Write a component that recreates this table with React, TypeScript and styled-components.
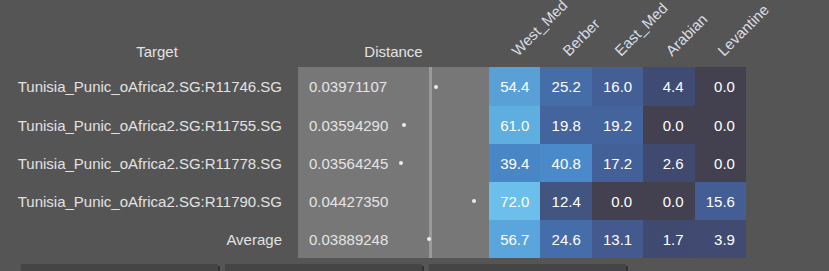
import React from "react";
import styled, { createGlobalStyle } from "styled-components";

const Global = createGlobalStyle`
  html, body { margin: 0; padding: 0; background: #555555; }
  body { font-family: "Liberation Sans", Arial, sans-serif; overflow: hidden; }
`;

const Page = styled.div`
  width: 829px;
  height: 271px;
  padding-left: 8px;
  box-sizing: border-box;
  overflow: hidden;
`;

const Grid = styled.div`
  display: grid;
  grid-template-columns: 290px 191px repeat(5, 51.4px);
  grid-template-rows: 67px 39px 38px 38px 38px 38px;
  font-size: 15px;
`;

const HeadCell = styled.div<{ $pl?: number }>`
  display: flex;
  align-items: flex-end;
  justify-content: center;
  padding: 0 0 7px ${(p) => p.$pl ?? 0}px;
  color: #e2e2e2;
  box-sizing: border-box;
`;

const RotHead = styled.div`
  display: flex;
  align-items: flex-end;
  padding: 0 0 8px 31px;
  box-sizing: border-box;
  color: #d8dde6;
  overflow: visible;
  min-width: 0;
`;

const RotLabel = styled.span`
  white-space: nowrap;
  display: inline-block;
  transform: rotate(-45deg);
  transform-origin: 0 100%;
`;

const LabelCell = styled.div`
  display: flex;
  align-items: center;
  justify-content: flex-end;
  padding: 0 16px 0 8px;
  color: #e2e2e2;
  white-space: nowrap;
`;

const DistCell = styled.div`
  position: relative;
  display: flex;
  align-items: center;
  padding-left: 11px;
  background: #777777;
  color: #e4e4e4;
`;

const MeanLine = styled.div`
  position: absolute;
  top: 0;
  bottom: 0;
  left: 131px;
  width: 3px;
  background: #9a9a9a;
`;

const Dot = styled.div`
  position: absolute;
  top: 50%;
  width: 4px;
  height: 4px;
  margin: -2px 0 0 -2px;
  border-radius: 50%;
  background: #e8ecf0;
`;

const HeatCell = styled.div<{ $bg: string }>`
  display: flex;
  align-items: center;
  justify-content: flex-end;
  padding-right: 11px;
  background: ${(p) => p.$bg};
  color: #ffffff;
`;

const Toolbar = styled.div`
  display: flex;
  gap: 7px;
  margin: 6px 0 0 13px;
`;

const ToolButton = styled.div`
  width: 197px;
  height: 30px;
  background: #454545;
  box-shadow: 2px 2px 0 #333333;
`;

type Row = { name: string; dist: number; vals: [number, string][] };

const Z = "#434150";
const rows: Row[] = [
  {
    name: "Tunisia_Punic_oAfrica2.SG:R11746.SG",
    dist: 0.03971107,
    vals: [[54.4, "#58a0d6"], [25.2, "#456ea8"], [16.0, "#445e96"], [4.4, "#404b74"], [0.0, Z]],
  },
  {
    name: "Tunisia_Punic_oAfrica2.SG:R11755.SG",
    dist: 0.0359429,
    vals: [[61.0, "#5eaee0"], [19.8, "#44649e"], [19.2, "#44649e"], [0.0, Z], [0.0, Z]],
  },
  {
    name: "Tunisia_Punic_oAfrica2.SG:R11778.SG",
    dist: 0.03564245,
    vals: [[39.4, "#4886c6"], [40.8, "#4a8aca"], [17.2, "#446099"], [2.6, "#40496f"], [0.0, Z]],
  },
  {
    name: "Tunisia_Punic_oAfrica2.SG:R11790.SG",
    dist: 0.0442735,
    vals: [[72.0, "#6cbfea"], [12.4, "#425581"], [0.0, Z], [0.0, Z], [15.6, "#445d95"]],
  },
];

const avg: Row = {
  name: "Average",
  dist: 0.03889248,
  vals: [[56.7, "#5aa6dc"], [24.6, "#456daa"], [13.1, "#44598d"], [1.7, "#404970"], [3.9, "#414b72"]],
};

const pops = ["West_Med", "Berber", "East_Med", "Arabian", "Levantine"];

const dotX = (v: number) => 106 + (v - 0.0359429) * 8403;

const DataRow = ({ r }: { r: Row }) => (
  <>
    <LabelCell>{r.name}</LabelCell>
    <DistCell>
      {r.dist.toFixed(8)}
      <MeanLine />
      <Dot style={{ left: dotX(r.dist) }} />
    </DistCell>
    {r.vals.map(([v, c], i) => (
      <HeatCell key={i} $bg={c}>
        {v.toFixed(1)}
      </HeatCell>
    ))}
  </>
);

export default function App() {
  return (
    <Page>
      <Global />
      <Grid>
        <HeadCell $pl={8}>Target</HeadCell>
        <HeadCell>Distance</HeadCell>
        {pops.map((p) => (
          <RotHead key={p}>
            <RotLabel>{p}</RotLabel>
          </RotHead>
        ))}
        {rows.map((r) => (
          <DataRow key={r.name} r={r} />
        ))}
        <DataRow r={avg} />
      </Grid>
      <Toolbar>
        <ToolButton />
        <ToolButton />
        <ToolButton />
      </Toolbar>
    </Page>
  );
}
